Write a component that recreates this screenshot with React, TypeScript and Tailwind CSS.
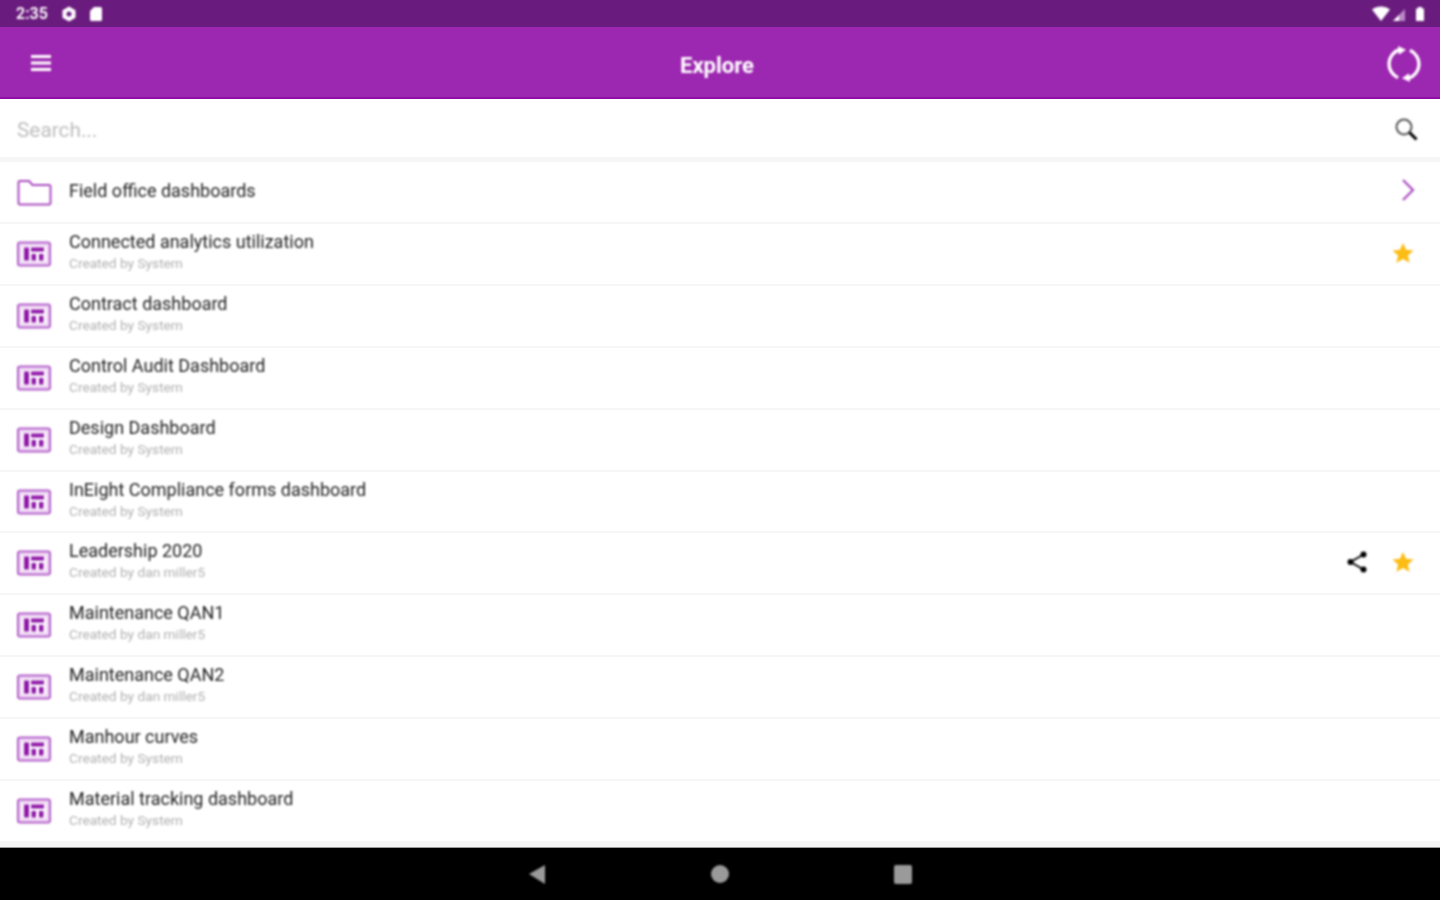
const ROWS = [
  { title: 'Connected analytics utilization', by: 'System', star: true },
  { title: 'Contract dashboard', by: 'System' },
  { title: 'Control Audit Dashboard', by: 'System' },
  { title: 'Design Dashboard', by: 'System' },
  { title: 'InEight Compliance forms dashboard', by: 'System' },
  { title: 'Leadership 2020', by: 'dan miller5', star: true, share: true },
  { title: 'Maintenance QAN1', by: 'dan miller5' },
  { title: 'Maintenance QAN2', by: 'dan miller5' },
  { title: 'Manhour curves', by: 'System' },
  { title: 'Material tracking dashboard', by: 'System' },
]

function DashIcon() {
  return (
    <svg width="36" height="28" viewBox="0 0 36 28" className="shrink-0 blur-[0.8px]">
      <rect x="2" y="2.5" width="32" height="23" rx="2" fill="#efd9f4" stroke="#b35fca" strokeWidth="2" />
      <rect x="6" y="6.500" width="24" height="15" fill="#fff" />
      <rect x="8" y="7.500" width="5" height="13" fill="#8f18a8" />
      <rect x="15" y="7.500" width="13" height="4" fill="#8f18a8" />
      <rect x="15.500" y="14" width="4.500" height="6.500" fill="#8f18a8" />
      <rect x="23" y="14" width="4.500" height="6.500" fill="#8f18a8" />
    </svg>
  )
}

function FolderIcon() {
  return (
    <svg width="36" height="28" viewBox="0 0 36 28" fill="none" className="shrink-0 blur-[0.8px]">
      <path
        d="M2.500 4.500A1.500 1.500 0 0 1 4 3h9l3.500 4H33a1.500 1.500 0 0 1 1.500 1.500V25a1.500 1.500 0 0 1-1.500 1.500H4A1.500 1.500 0 0 1 2.500 25z"
        stroke="#a94cc0"
        strokeWidth="2"
      />
    </svg>
  )
}

function Star() {
  return (
    <svg width="24" height="24" viewBox="0 0 24 24" className="mb-[2px] blur-[0.8px]">
      <path d="M12 2l3.100 6.800 7.400.7-5.600 4.900 1.700 7.300-6.600-3.800-6.600 3.800 1.700-7.300-5.600-4.900 7.400-.7z" fill="#fcbc13" />
    </svg>
  )
}

function Share() {
  return (
    <svg width="24" height="24" viewBox="0 0 24 24" fill="none" className="mb-[2px] blur-[0.8px]">
      <path d="M18.500 4.500L5.500 12l13 7.500" stroke="#000" strokeWidth="1.800" />
      <circle cx="18.500" cy="4.500" r="3" fill="#000" />
      <circle cx="5.500" cy="12" r="3" fill="#000" />
      <circle cx="18.500" cy="19.500" r="3" fill="#000" />
    </svg>
  )
}

function Sync() {
  return (
    <svg width="36" height="36" viewBox="0 0 36 36" fill="none" stroke="#fff" strokeWidth="3.400" className="mt-[4px] blur-[0.8px]">
      <path d="M12 31.700A15 15 0 0 1 14 3.500" />
      <path d="M24 4.300A15 15 0 0 1 22 32.500" />
      <path d="M12 0L20 3.800l-7 5z" fill="#fff" stroke="none" />
      <path d="M24 36L16 32.200l7-5z" fill="#fff" stroke="none" />
    </svg>
  )
}

export default function App() {
  return (
    <div className="flex h-[900px] w-[1440px] flex-col overflow-hidden bg-[#f6f6f6] font-['Roboto',sans-serif]">
      {/* Status bar */}
      <div className="flex h-[27px] items-center justify-between bg-[#6a1b7e] pl-[16px] pr-[15px] text-white">
        <div className="flex items-center gap-[12px]">
          <span className="text-[16px] font-semibold blur-[0.8px]">2:35</span>
          <svg width="16" height="16" viewBox="0 0 16 16" fill="#fff" className="ml-[1px] blur-[0.8px]">
            <path fillRule="evenodd" d="M8 .5l6.500 3.700v7.600L8 15.500l-6.500-3.700V4.200zM8 5.500a2.500 2.500 0 1 0 0 5 2.500 2.500 0 0 0 0-5z" />
          </svg>
          <svg width="14" height="16" viewBox="0 0 14 16" fill="#fff" className="blur-[0.8px]">
            <path d="M5 1h6.500A1.500 1.500 0 0 1 13 2.500v11a1.500 1.500 0 0 1-1.500 1.500h-9A1.500 1.500 0 0 1 1 13.500V5z" />
          </svg>
        </div>
        <div className="flex items-center gap-[7px]">
          <svg width="36" height="16" viewBox="0 0 36 16" className="blur-[0.8px]">
            <path d="M0 3.500C5-.5 13-.5 18 3.500L9 15z" fill="#fff" />
            <path d="M21 15L33 3v12z" fill="#b98ac6" />
            <path d="M21 15l6-6v6z" fill="#fff" />
          </svg>
          <svg width="10" height="16" viewBox="0 0 10 16" fill="#fff" className="blur-[0.8px]">
            <path d="M3 1h4v1.500h2V15H1V2.500h2z" />
          </svg>
        </div>
      </div>

      {/* App bar */}
      <header className="flex h-[72px] shrink-0 items-center justify-between border-b-2 border-[#8e0ea8] bg-[#9c27b0] pl-[31px] pr-[18px] text-white">
        <svg width="20" height="18" viewBox="0 0 20 18" fill="#fff" className="mt-[1px] blur-[0.8px]">
          <rect y="1" width="20" height="3" />
          <rect y="7.500" width="20" height="3" />
          <rect y="14" width="20" height="3" />
        </svg>
        <h1 className="mr-[3px] mt-[6px] text-[22px] font-bold blur-[0.8px]">Explore</h1>
        <Sync />
      </header>

      {/* Search */}
      <div className="flex h-[58px] shrink-0 items-center justify-between bg-white pl-[17px] pr-[22px]">
        <span className="pt-[5px] text-[20.800px] text-[#bdbdbd] blur-[0.8px]">Search...</span>
        <svg width="24" height="24" viewBox="0 0 24 24" fill="none" className="mt-[2px] blur-[0.8px]">
          <circle cx="10" cy="10" r="7.500" stroke="#555" strokeWidth="2" />
          <path d="M15.500 15.500L22.500 22.500" stroke="#000" strokeWidth="3" />
        </svg>
      </div>

      {/* Folder */}
      <div className="mt-[5px] flex h-[60px] shrink-0 items-center bg-white pl-[16px] pr-[25px]">
        <FolderIcon />
        <span className="ml-[17px] flex-1 pb-[3px] text-[18px] text-[#222] blur-[0.8px]">Field office dashboards</span>
        <svg width="14" height="22" viewBox="0 0 14 22" fill="none" stroke="#a94cc0" strokeWidth="2.200" className="mb-[4px] blur-[0.8px]">
          <path d="M2 1l10 10L2 21" />
        </svg>
      </div>

      {/* List */}
      <div className="mt-[2px] flex flex-col gap-[2px]">
        {ROWS.map(r => (
          <div key={r.title} className="flex h-[59.900px] items-center bg-white pl-[16px] pr-[25px]">
            <DashIcon />
            <div className="ml-[17px] flex-1 pb-[5px] blur-[0.8px]">
              <div className="text-[18px] leading-[24px] text-[#222]">{r.title}</div>
              <div className="text-[13.700px] leading-[19px] text-[#b0b0b0]">Created by {r.by}</div>
            </div>
            {r.share && (
              <div className="mr-[22px]">
                <Share />
              </div>
            )}
            {r.star && <Star />}
          </div>
        ))}
      </div>

      {/* Nav bar */}
      <div className="mt-auto flex h-[53px] shrink-0 items-center justify-center gap-[165px] border-t border-[#999] bg-black">
        <svg width="18" height="20" viewBox="0 0 18 20" fill="#9a9a9a" className="blur-[0.8px]">
          <path d="M1 10L17 1v19z" />
        </svg>
        <div className="h-[18px] w-[18px] rounded-full bg-[#9a9a9a] blur-[0.8px]" />
        <div className="h-[19px] w-[18px] rounded-[2px] bg-[#9a9a9a] blur-[0.8px]" />
      </div>
    </div>
  )
}
